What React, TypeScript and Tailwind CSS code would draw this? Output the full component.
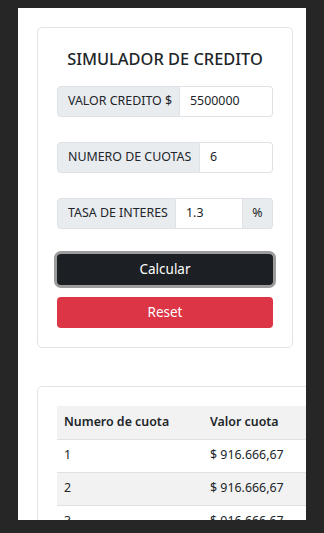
import React from "react";

const rows = [
  { n: 1, v: "$ 916.666,67" },
  { n: 2, v: "$ 916.666,67" },
  { n: 3, v: "$ 916.666,67" },
];

export default function App() {
  return (
    <div
      className="w-[324px] h-[533px] bg-[#262626] pt-[8px] pl-[18px] overflow-hidden"
      style={{ fontFamily: '"Noto Sans", "Open Sans", sans-serif' }}
    >
      <div className="w-[288px] h-[512px] bg-white overflow-hidden pt-[19px] pl-[19px] text-[#212529]">
        <div className="w-[256px] border border-[#e2e3e5] rounded-[5px] px-[19px] pt-[19px] pb-[19px]">
          <h1 className="text-center text-[16.4px] font-medium leading-[24px] whitespace-nowrap">
            SIMULADOR DE CREDITO
          </h1>
          <div className="mt-[15px] flex h-[31px] text-[12.4px] whitespace-nowrap">
            <div className="flex items-center pl-[10px] bg-[#e9ecef] border border-[#dee2e6] rounded-l-[4px] w-[123px]">
              VALOR CREDITO $
            </div>
            <div className="flex items-center flex-1 px-[10px] border border-l-0 border-[#dee2e6] rounded-r-[4px]">
              5500000
            </div>
          </div>
          <div className="mt-[25px] flex h-[31px] text-[12.4px] whitespace-nowrap">
            <div className="flex items-center pl-[10px] bg-[#e9ecef] border border-[#dee2e6] rounded-l-[4px] w-[143px]">
              NUMERO DE CUOTAS
            </div>
            <div className="flex items-center flex-1 px-[10px] border border-l-0 border-[#dee2e6] rounded-r-[4px]">
              6
            </div>
          </div>
          <div className="mt-[25px] flex h-[31px] text-[12.4px] whitespace-nowrap">
            <div className="flex items-center pl-[10px] bg-[#e9ecef] border border-[#dee2e6] rounded-l-[4px] w-[119px]">
              TASA DE INTERES
            </div>
            <div className="flex items-center w-[67px] px-[10px] border border-l-0 border-[#dee2e6]">
              1.3
            </div>
            <div className="flex items-center justify-center flex-1 bg-[#e9ecef] border border-l-0 border-[#dee2e6] rounded-r-[4px]">
              %
            </div>
          </div>
          <button className="mt-[25px] w-full h-[31px] rounded-[4px] bg-[#1c1f23] text-white text-[13.5px] ring-[3px] ring-[#9c9c9c] flex items-center justify-center">
            Calcular
          </button>
          <button className="mt-[12px] w-full h-[31px] rounded-[4px] bg-[#dc3545] text-white text-[13.5px] flex items-center justify-center">
            Reset
          </button>
        </div>

        <div className="mt-[38px] w-[420px] border border-[#e2e3e5] rounded-[5px] px-[19px] pt-[19px] pb-[19px]">
          <table className="w-full text-[12.4px] border-collapse">
            <thead>
              <tr className="bg-[#f2f2f2] h-[33px] border-b border-[#dee2e6]">
                <th className="text-left font-semibold px-[7px] w-[146px]">Numero de cuota</th>
                <th className="text-left font-semibold px-[7px]">Valor cuota</th>
              </tr>
            </thead>
            <tbody>
              {rows.map((r, i) => (
                <tr
                  key={r.n}
                  className={`h-[33px] border-b border-[#dee2e6] ${i % 2 === 1 ? "bg-[#f2f2f2]" : "bg-white"}`}
                >
                  <td className="px-[7px]">{r.n}</td>
                  <td className="px-[7px]">{r.v}</td>
                </tr>
              ))}
            </tbody>
          </table>
        </div>
      </div>
    </div>
  );
}
